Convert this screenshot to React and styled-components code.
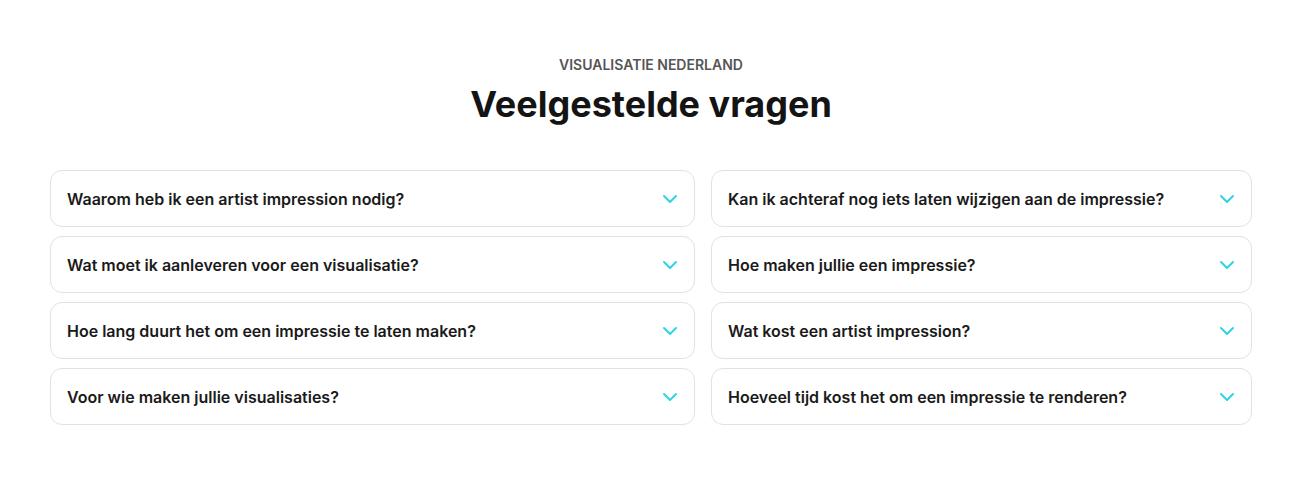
import React from "react";
import styled, { createGlobalStyle } from "styled-components";

const GlobalStyle = createGlobalStyle`
  html, body {
    margin: 0;
    padding: 0;
    background: #ffffff;
    font-family: Inter, "Noto Sans", sans-serif;
  }
`;

const Section = styled.section`
  padding: 56px 0 52px;
`;

const Header = styled.div`
  text-align: center;
  margin-bottom: 44px;
  padding-right: 3px;
`;

const Eyebrow = styled.div`
  font-size: 14px;
  font-weight: 600;
  color: #555555;
  line-height: 17px;
  margin-bottom: 9px;
`;

const Title = styled.h2`
  margin: 0;
  font-size: 36px;
  font-weight: 700;
  color: #141414;
  line-height: 44px;
`;

const Grid = styled.div`
  display: grid;
  grid-template-columns: 645px 541px;
  column-gap: 16px;
  padding-left: 50px;
`;

const Column = styled.div`
  display: flex;
  flex-direction: column;
  gap: 9px;
`;

const Item = styled.button`
  display: flex;
  align-items: center;
  justify-content: space-between;
  height: 57px;
  padding: 0 16px;
  border: 1px solid #e2e2e2;
  border-radius: 12px;
  background: #ffffff;
  font-family: inherit;
  font-size: 16px;
  font-weight: 600;
  color: #1a1a1a;
  text-align: left;
  cursor: pointer;
`;

const Chevron = () => (
  <svg width="16" height="10" viewBox="0 0 16 10" fill="none">
    <path d="M2 2l6 6 6-6" stroke="#2dd4e6" strokeWidth="2" strokeLinecap="round" strokeLinejoin="round" />
  </svg>
);

const left = [
  "Waarom heb ik een artist impression nodig?",
  "Wat moet ik aanleveren voor een visualisatie?",
  "Hoe lang duurt het om een impressie te laten maken?",
  "Voor wie maken jullie visualisaties?",
];

const right = [
  "Kan ik achteraf nog iets laten wijzigen aan de impressie?",
  "Hoe maken jullie een impressie?",
  "Wat kost een artist impression?",
  "Hoeveel tijd kost het om een impressie te renderen?",
];

const App = () => (
  <>
    <GlobalStyle />
    <Section>
      <Header>
        <Eyebrow>VISUALISATIE NEDERLAND</Eyebrow>
        <Title>Veelgestelde vragen</Title>
      </Header>
      <Grid>
        {[left, right].map((col, i) => (
          <Column key={i}>
            {col.map((q) => (
              <Item key={q}>
                <span>{q}</span>
                <Chevron />
              </Item>
            ))}
          </Column>
        ))}
      </Grid>
    </Section>
  </>
);

export default App;
